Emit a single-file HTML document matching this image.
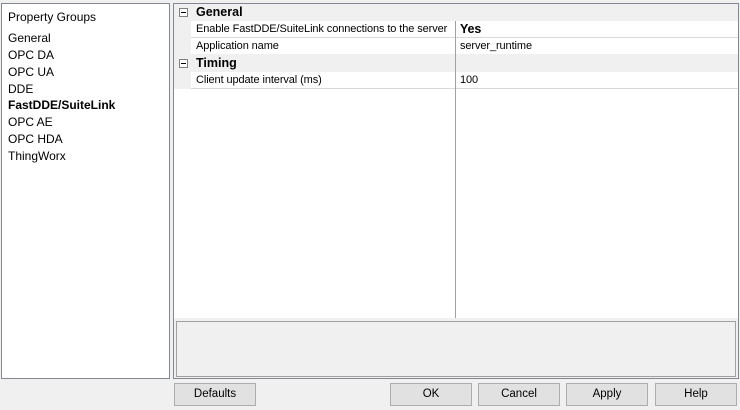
<!DOCTYPE html>
<html><head><style>
body{margin:0;width:740px;height:410px;background:#f0f0f0;font-family:"Liberation Sans",Arial,sans-serif;font-size:12px;color:#000;position:relative;overflow:hidden}
.abs{position:absolute}
#left{left:1px;top:3px;width:167px;height:374px;border:1px solid #828790;background:#fff}
#left div{position:absolute;left:6px;white-space:nowrap}
#right{left:173px;top:3px;width:564px;height:374px;border:1px solid #828790;background:#f0f0f0}
#grid{left:0;top:0;width:564px;height:314px;background:#fff}
.row{position:absolute;left:0;width:564px;height:16px;border-bottom:1px solid #f0f0f0}
.cat{background:#f0f0f0;font-weight:bold;font-size:13px}
.row span{position:absolute;top:2px;white-space:nowrap;font-size:11px;letter-spacing:-0.1px}
.cat span{font-size:12.5px;letter-spacing:0;top:1px}
.gm{position:absolute;left:0;top:0;width:17px;height:17px;background:#f0f0f0}
.box{position:absolute;left:5px;top:4px;width:7px;height:7px;border:1px solid #808080;background:#fff}
.box:after{content:"";position:absolute;left:1px;top:3px;width:5px;height:1px;background:#000}
#sep{left:281px;width:1px;background:#a0a0a0}
#desc{left:2px;top:317px;width:558px;height:54px;border:1px solid #a0a0a0;background:#f0f0f0}
.btn{position:absolute;top:383px;width:80px;height:21px;border:1px solid #adadad;background:#e1e1e1;text-align:center;line-height:21px;font-size:11.5px}
</style></head><body>
<div id="left" class="abs">
<div style="top:6px">Property Groups</div>
<div style="top:27px">General</div>
<div style="top:44px">OPC DA</div>
<div style="top:61px">OPC UA</div>
<div style="top:78px">DDE</div>
<div style="top:94px;font-weight:bold">FastDDE/SuiteLink</div>
<div style="top:111px">OPC AE</div>
<div style="top:128px">OPC HDA</div>
<div style="top:145px">ThingWorx</div>
</div>
<div id="right" class="abs">
<div id="grid" class="abs">
<div class="row cat" style="top:0"><div class="box"></div><span style="left:22px">General</span></div>
<div class="row" style="top:17px;border-bottom-color:#d8d8d8"><div class="gm"></div><span style="left:22px">Enable FastDDE/SuiteLink connections to the server</span><span style="left:286px;font-weight:bold;font-size:12.5px;top:1px">Yes</span></div>
<div class="row" style="top:34px"><div class="gm"></div><span style="left:22px">Application name</span><span style="left:286px">server_runtime</span></div>
<div class="row cat" style="top:51px"><div class="box"></div><span style="left:22px">Timing</span></div>
<div class="row" style="top:68px;border-bottom-color:#d8d8d8"><div class="gm"></div><span style="left:22px">Client update interval (ms)</span><span style="left:286px">100</span></div>
<div id="sep" class="abs" style="top:17px;height:297px"></div>
</div>
<div id="desc" class="abs"></div>
</div>
<div class="btn" style="left:174px">Defaults</div>
<div class="btn" style="left:390px">OK</div>
<div class="btn" style="left:478px">Cancel</div>
<div class="btn" style="left:566px">Apply</div>
<div class="btn" style="left:655px">Help</div>
</body></html>
